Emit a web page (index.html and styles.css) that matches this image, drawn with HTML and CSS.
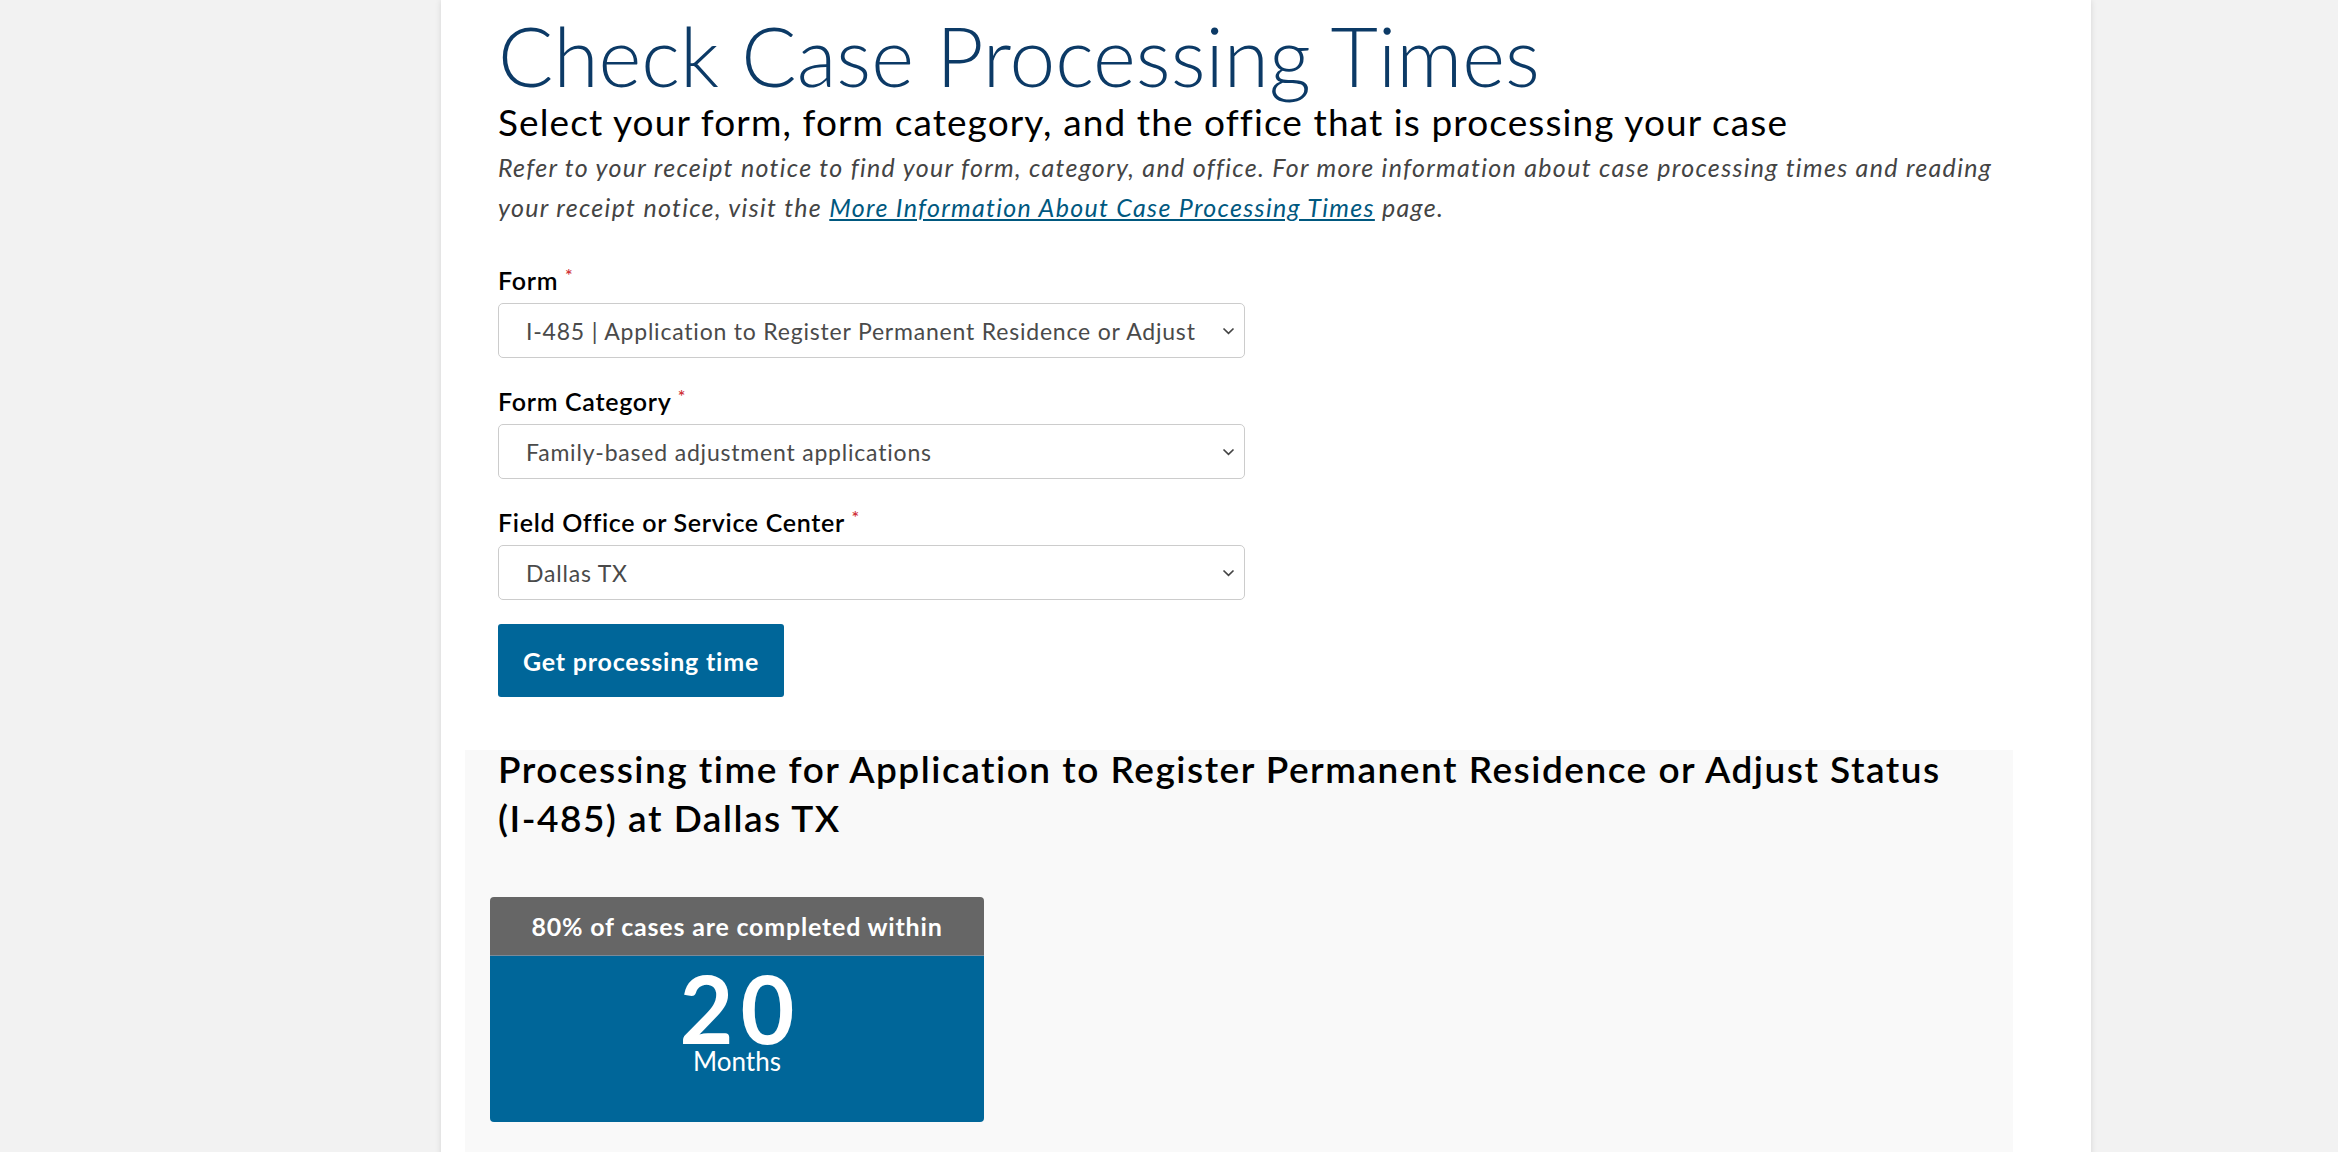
FILE: index.html
```html
<!DOCTYPE html>
<html lang="en">
<head>
    <meta charset="UTF-8">
    <meta name="viewport" content="width=device-width, initial-scale=1.0">
    <title>Check Case Processing Times</title>
    <link rel="stylesheet" href="styles.css">
</head>
<body>
    <div class="page">
        <main class="panel">
            <h1 class="title">Check Case Processing Times</h1>
            <h2 class="subtitle">Select your form, form category, and the office that is processing your case</h2>
            <p class="intro">
                Refer to your receipt notice to find your form, category, and office. For more information about case processing times and reading
                your receipt notice, visit the <a href="#">More Information About Case Processing Times</a> page.
            </p>

            <form class="lookup">
                <div class="field">
                    <label for="form">Form <span class="req">*</span></label>
                    <div class="select-wrap">
                        <select id="form">
                            <option>I-485 | Application to Register Permanent Residence or Adjust Status</option>
                        </select>
                        <svg class="chevron" width="13" height="8" viewBox="0 0 13 8"><path d="M1.5 1.5 L6.5 6.3 L11.5 1.5" fill="none" stroke="#444" stroke-width="1.7"/></svg>
                    </div>
                </div>

                <div class="field">
                    <label for="category">Form Category <span class="req">*</span></label>
                    <div class="select-wrap">
                        <select id="category">
                            <option>Family-based adjustment applications</option>
                        </select>
                        <svg class="chevron" width="13" height="8" viewBox="0 0 13 8"><path d="M1.5 1.5 L6.5 6.3 L11.5 1.5" fill="none" stroke="#444" stroke-width="1.7"/></svg>
                    </div>
                </div>

                <div class="field">
                    <label for="office">Field Office or Service Center <span class="req">*</span></label>
                    <div class="select-wrap">
                        <select id="office">
                            <option>Dallas TX</option>
                        </select>
                        <svg class="chevron" width="13" height="8" viewBox="0 0 13 8"><path d="M1.5 1.5 L6.5 6.3 L11.5 1.5" fill="none" stroke="#444" stroke-width="1.7"/></svg>
                    </div>
                </div>

                <button type="button" class="submit-btn">Get processing time</button>
            </form>

            <section class="result">
                <h3 class="result-title">Processing time for Application to Register Permanent Residence or Adjust Status (I-485) at Dallas TX</h3>
                <div class="time-card">
                    <div class="time-card-head">80% of cases are completed within</div>
                    <div class="time-card-body">
                        <div class="time-value">20</div>
                        <div class="time-unit">Months</div>
                    </div>
                </div>
            </section>
        </main>
    </div>
</body>
</html>
```

FILE: styles.css
```css
body {
    margin: 0;
    background: #f2f2f2;
    font-family: Lato, "Open Sans", "Liberation Sans", sans-serif;
    color: #000;
    overflow: hidden;
}

.page {
    padding-left: 441px;
}

.panel {
    width: 1650px;
    min-height: 1152px;
    box-sizing: border-box;
    background: #fff;
    box-shadow: 0 0 6px rgba(0,0,0,0.12);
    padding: 10px 78px 0 57px;
}

.title {
    margin: 0;
    font-size: 82px;
    font-weight: 300;
    line-height: 90px;
    color: #0c3a66;
}

.subtitle {
    margin: 0;
    font-size: 37px;
    font-weight: 400;
    letter-spacing: 1.1px;
    line-height: 43px;
    color: #000;
}

.intro {
    margin: 4px 0 0;
    font-size: 25px;
    letter-spacing: 1.3px;
    line-height: 40px;
    font-style: italic;
    color: #444;
}

.intro a {
    color: #00587f;
    text-decoration: underline;
}

.lookup {
    margin-top: 38px;
}

.field {
    width: 747px;
    margin-bottom: 28px;
}

.field label {
    display: block;
    font-size: 25px;
    font-weight: 600;
    letter-spacing: 0.7px;
    line-height: 30px;
    margin-bottom: 8px;
}

.req {
    color: #d0333a;
    font-size: 18px;
    vertical-align: top;
    line-height: 20px;
}

.select-wrap {
    position: relative;
}

.select-wrap select {
    -webkit-appearance: none;
    appearance: none;
    width: 100%;
    height: 55px;
    border: 1px solid #ccc;
    border-radius: 5px;
    background: #fff;
    padding: 0 46px 0 27px;
    font-family: inherit;
    font-size: 23px;
    letter-spacing: 0.8px;
    color: #4a4a4a;
}

.chevron {
    position: absolute;
    right: 10px;
    top: 24px;
    pointer-events: none;
}

.submit-btn {
    margin-top: -4px;
    width: 286px;
    height: 73px;
    border: none;
    border-radius: 3px;
    background: #006699;
    color: #fff;
    font-family: inherit;
    font-size: 25px;
    font-weight: 700;
    letter-spacing: 0.8px;
    cursor: pointer;
}

.result {
    margin: 53px 0 0 -33px;
    padding: 1px 33px 40px;
    background: #f9f9f9;
}

.result-title {
    margin: -7px 0 0;
    font-size: 37px;
    font-weight: 600;
    letter-spacing: 1.5px;
    line-height: 49px;
}

.time-card {
    width: 494px;
    margin: 55px 0 0 -8px;
    border-radius: 4px;
    overflow: hidden;
    color: #fff;
    text-align: center;
}

.time-card-head {
    height: 58px;
    line-height: 58px;
    background: #666;
    font-size: 25px;
    font-weight: 700;
    letter-spacing: 0.8px;
    border-bottom: 1px solid #7a8a99;
}

.time-card-body {
    background: #006699;
    padding: 13px 0 47px;
}

.time-value {
    padding-left: 7px;
    font-size: 93px;
    font-weight: 700;
    letter-spacing: 7px;
    line-height: 78px;
}

.time-unit {
    font-size: 26px;
    line-height: 28px;
}
```
